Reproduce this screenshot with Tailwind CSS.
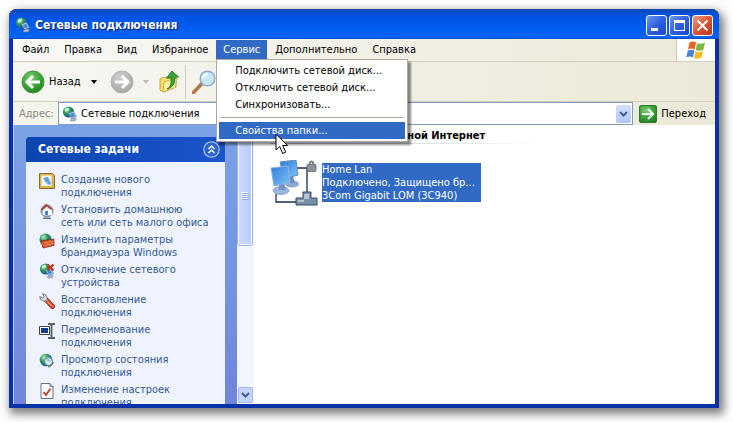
<!DOCTYPE html>
<html lang="ru">
<head>
<meta charset="utf-8">
<title>Сетевые подключения</title>
<script src="https://cdn.jsdelivr.net/npm/@tailwindcss/browser@4"></script>
</head>
<body class="flex h-screen flex-col overflow-hidden bg-[#fdfdfd] pt-[9px] pr-[14px] pb-[14px] pl-[9px] font-['DejaVu_Sans_Condensed','DejaVu_Sans',sans-serif] text-[11px] leading-[13px] text-black">
<svg class="absolute size-0" aria-hidden="true">
  <defs>
    <radialGradient id="globe" cx=".35" cy=".3" r=".8"><stop offset="0" stop-color="#b9f0c4"/><stop offset=".4" stop-color="#2f9a5c"/><stop offset="1" stop-color="#17458f"/></radialGradient>
    <linearGradient id="screen" x1="0" y1="0" x2="1" y2="1"><stop offset="0" stop-color="#2f7bd8"/><stop offset="1" stop-color="#7fc4fa"/></linearGradient>
    <radialGradient id="green" cx=".4" cy=".3" r=".8"><stop offset="0" stop-color="#7fcf6f"/><stop offset=".5" stop-color="#3fa63a"/><stop offset="1" stop-color="#1d7a1c"/></radialGradient>
    <radialGradient id="gray" cx=".4" cy=".3" r=".8"><stop offset="0" stop-color="#d0d0d0"/><stop offset="1" stop-color="#a0a0a0"/></radialGradient>
    <symbol id="net" viewBox="0 0 16 16">
      <circle cx="6.500" cy="6" r="5.600" fill="url(#globe)"/>
      <path d="M3 3.500q2-2 4-1.500l-1 2.500-3 1z" fill="#d9ffe0"/>
      <path d="M6.500 7l5-1.500 3 5-5 2z" fill="#d5e6f7" stroke="#4d719f" stroke-width=".7"/>
      <path d="M7.800 7.700l3.400-1 2 3.400-3.500 1.300z" fill="#3b8bd9"/>
      <path d="M8 14q3-3 6.500-1.500L13 15H9z" fill="#a9bccf" stroke="#6b7f96" stroke-width=".5"/>
    </symbol>
  </defs>
</svg>

<div class="flex min-h-0 flex-1 flex-col rounded-t-lg bg-[#0831a8] shadow-[3px_4px_9px_2px_rgba(0,0,0,0.5)]">
  <header class="flex h-[30px] shrink-0 items-center rounded-t-lg bg-linear-to-b from-[#0a48b8] via-[#0054e6] via-25% to-[#0464f8] pt-[2px] pr-[6px] pl-[6px] shadow-[inset_0_1px_0_#1a4a9e,inset_0_-1px_0_#0650cc]">
    <svg class="size-[16px]"><use href="#net"/></svg>
    <h1 class="ml-[4px] flex-1 text-[12px] font-bold text-white [text-shadow:1px_1px_1px_#0a1f66]">Сетевые подключения</h1>
    <div class="flex gap-[2px]">
      <button aria-label="Свернуть" class="size-[21px] rounded-[3px] border border-white bg-linear-to-br from-[#6f97f2] via-[#2f5ee0] to-[#1c47c4]"><svg viewBox="0 0 19 19" class="size-full"><path d="M4 12h7v3H4z" fill="#fff"/></svg></button>
      <button aria-label="Развернуть" class="size-[21px] rounded-[3px] border border-white bg-linear-to-br from-[#6f97f2] via-[#2f5ee0] to-[#1c47c4]"><svg viewBox="0 0 19 19" class="size-full"><path d="M4 4h11v11H4zM5 7v7h9V7z" fill="#fff" fill-rule="evenodd"/></svg></button>
      <button aria-label="Закрыть" class="size-[21px] rounded-[3px] border border-white bg-linear-to-br from-[#ee9a80] via-[#dc5334] to-[#b8361a]"><svg viewBox="0 0 19 19" class="size-full"><path d="M4.500 4.500l10 10M14.500 4.500l-10 10" stroke="#fff" stroke-width="2"/></svg></button>
    </div>
  </header>

  <div class="mx-[4px] mb-[4px] flex min-h-0 flex-1 flex-col bg-white">
    <div class="flex h-[23px] shrink-0 border-b border-[#d3cfbf] bg-linear-to-r from-[#f8f8f6] to-[#ece9d8] pl-[2px]">
      <nav class="relative z-10 flex h-[20px] flex-1 gap-px pt-[1px]">
        <button class="px-[7px]">Файл</button>
        <button class="px-[7px]">Правка</button>
        <button class="px-[7px]">Вид</button>
        <button class="px-[7px]">Избранное</button>
        <div class="relative">
          <button class="h-full bg-[#316ac5] px-[7px] text-white">Сервис</button>
          <div class="absolute top-full left-0 w-[192px] border border-[#aca899] bg-white p-[2px] shadow-[3px_3px_2px_rgba(0,0,0,0.45)]">
            <button class="block h-[17px] w-full pl-[16px] text-left">Подключить сетевой диск...</button>
            <button class="block h-[17px] w-full pl-[16px] text-left">Отключить сетевой диск...</button>
            <button class="block h-[17px] w-full pl-[16px] text-left">Синхронизовать...</button>
            <hr class="mx-[1px] my-[4px] border-[#aca899]">
            <button class="block h-[17px] w-full bg-[#316ac5] pl-[16px] text-left text-white">Свойства папки...</button>
            <svg class="absolute top-[73px] left-[58px] h-[22px] w-[14px]" viewBox="0 0 14 22"><path d="M1 1v16l3.700-3.500 3 7 3-1.300-3-6.700H12.500z" fill="#fff" stroke="#000"/></svg>
          </div>
        </div>
        <button class="px-[7px]">Дополнительно</button>
        <button class="px-[7px]">Справка</button>
      </nav>
      <div class="flex w-[39px] items-center justify-center border-l border-[#c9c5b4] bg-white">
        <svg class="h-[19px] w-[20px]" viewBox="0 0 20 19">
          <path d="M3.500 1.500Q7-.5 10 1.500L8.700 8.500Q5.500 6.700 2 8.300z" fill="#e8622c"/>
          <path d="M11 2.200q4 1.600 8-.7l-1.700 7.300q-3.700 1.800-7.500.2z" fill="#7cb940"/>
          <path d="M1.800 9.500q3.500-1.700 6.700 0L7 16.500Q4 14.800.3 16.300z" fill="#4a86d8"/>
          <path d="M9.600 10.200q3.700 1.500 7.500-.3l-1.600 6.900q-3.700 1.900-7.400.3z" fill="#f5bf2c"/>
        </svg>
      </div>
    </div>

    <div class="flex h-[40px] shrink-0 items-center border-b border-[#d3cfbf] bg-linear-to-r from-[#f7f6f2] to-[#ece9d8] pl-[8px]">
      <button class="flex items-center gap-[4px]">
        <svg class="size-[24px]" viewBox="0 0 24 24"><circle cx="12" cy="12" r="11" fill="url(#green)" stroke="#4d9a48"/><path d="M12 6l-6 6 6 6M6.500 12H19" fill="none" stroke="#fff" stroke-width="3"/></svg>
        Назад
      </button>
      <button aria-label="История" class="ml-[10px]"><svg class="h-[4px] w-[6px]" viewBox="0 0 6 4"><path d="M0 0h6L3 4z"/></svg></button>
      <button aria-label="Вперёд" class="ml-[13px]"><svg class="size-[24px]" viewBox="0 0 24 24"><circle cx="12" cy="12" r="11" fill="url(#gray)" stroke="#b5b5b5"/><path d="M12 6l6 6-6 6M17.500 12H5" fill="none" stroke="#fff" stroke-width="3"/></svg></button>
      <button aria-label="История вперёд" class="ml-[9px]"><svg class="h-[4px] w-[6px]" viewBox="0 0 6 4"><path d="M0 0h6L3 4z" fill="#bbb"/></svg></button>
      <button aria-label="Вверх" class="ml-[9px]">
        <svg class="size-[23px]" viewBox="0 0 23 23"><path d="M2 9l5-2 2 1.500L18 6v11L6 22 2 20z" fill="#f7df6a" stroke="#b8962c" stroke-width=".8"/><path d="M6 12l13-4-2 9.500L5 22z" fill="#fdf0a0" stroke="#c5a43a" stroke-width=".8"/><path d="M9 19q5-2 4-11H8.500L14 1l6.500 6H17q.5 10-8 12z" fill="#35a535" stroke="#1b6e1f" stroke-width=".8"/></svg>
      </button>
      <span class="mr-[6px] ml-[4px] h-[34px] w-px bg-[#cfccbd]"></span>
      <button aria-label="Поиск"><svg class="size-[24px]" viewBox="0 0 24 24"><path d="M1.500 22.500l8.500-9" stroke="#b5764c" stroke-width="3.500" stroke-linecap="round"/><circle cx="15.500" cy="8.500" r="7.300" fill="#c9e8fa" stroke="#8cacc6" stroke-width="1.500"/><path d="M11 8q1-4 5-4" stroke="#fff" stroke-width="2" fill="none"/></svg></button>
    </div>

    <div class="flex h-[23px] shrink-0 items-center bg-linear-to-r from-[#f5f4ee] to-[#ece9d8] pr-[9px] pl-[6px]">
      <label for="address" class="w-[39px] text-[#8b8a80]">Адрес:</label>
      <div class="flex h-full min-w-0 flex-1 items-center border border-[#7f9db9] bg-white pr-px pl-[3px]">
        <svg class="size-[16px] shrink-0"><use href="#net"/></svg>
        <input id="address" value="Сетевые подключения" class="ml-[3px] min-w-0 flex-1 outline-none">
        <button aria-label="Список адресов" class="flex h-[18px] w-[15px] items-center justify-center rounded-[2px] bg-linear-to-b from-[#d3e0fd] to-[#b0c6f6]"><svg class="h-[6px] w-[9px]" viewBox="0 0 9 6"><path d="M1 1l3.500 3.500L8 1" fill="none" stroke="#45608f" stroke-width="2"/></svg></button>
      </div>
      <button class="ml-[6px] flex items-center gap-[4px]">
        <svg class="size-[18px]" viewBox="0 0 18 18"><rect x=".5" y=".5" width="17" height="17" rx="1.500" fill="url(#green)" stroke="#2e7d2e"/><path d="M9 4l5 5-5 5M13.500 9H3" fill="none" stroke="#fff" stroke-width="2"/></svg>
        Переход
      </button>
    </div>

    <div class="flex min-h-0 flex-1">
      <aside class="w-[224px] shrink-0 overflow-hidden border-l border-[#c5d5f7] bg-linear-to-b from-[#7ba2e7] to-[#6f86db] pt-[12px] pr-[12px] pl-[12px]">
        <h2 class="flex h-[25px] items-center justify-between rounded-t-[4px] bg-linear-to-r from-[#0d45b0] to-[#1b55cc] pr-[5px] pl-[12px] text-[12px] font-bold text-white">Сетевые задачи
          <button aria-label="Свернуть раздел"><svg class="size-[17px]" viewBox="0 0 17 17"><circle cx="8.500" cy="8.500" r="7.700" fill="#2f62cf" stroke="#9db9f2" stroke-width="1.300"/><path d="M5.500 8l3-3 3 3M5.500 12l3-3 3 3" fill="none" stroke="#fff" stroke-width="1.500"/></svg></button>
        </h2>
        <ul class="flex h-[260px] flex-col gap-[4px] bg-[#eff3ff] pt-[11px] pl-[13px]">
          <li><a href="#" class="flex gap-[6px] text-[#33598f]"><svg class="size-[16px]" viewBox="0 0 16 16"><path d="M.5.5h13l2 2v13H.5z" fill="#d9b34e" stroke="#8c6b1f"/><path d="M2.500 2.500h10v10.500h-10z" fill="#f3f7fc"/><path d="M4 5l5-1 2 4-4 2zM9 8l3 1-1 3-3-1z" fill="#5da0d8"/></svg><span>Создание нового<br>подключения</span></a></li>
          <li><a href="#" class="flex gap-[6px] text-[#33598f]"><svg class="size-[16px]" viewBox="0 0 16 16"><circle cx="8" cy="8" r="6" fill="#a9bdd6" stroke="#6b819f"/><path d="M4 6.500L8.500 3 13 6.500V12H4z" fill="#fff"/><path d="M2 6.500L7 .8 13.500 6 12 7 7.700 3.500 3.500 7.500z" fill="#b8402e"/><path d="M6 8h3v4H6z" fill="#527fc0"/><path d="M4 15.300h8" stroke="#53657b" stroke-width="1.300"/></svg><span>Установить домашнюю<br>сеть или сеть малого офиса</span></a></li>
          <li><a href="#" class="flex gap-[6px] text-[#33598f]"><svg class="size-[16px]" viewBox="0 0 16 16"><circle cx="6.500" cy="6.500" r="6" fill="url(#globe)"/><path d="M2 8l13-2v6.500L4 15z" fill="#d24a20" stroke="#7d240e" stroke-width=".7"/><path d="M3 10.300l12-2M4 12.600l11-2.200M7 7.500v2.200M11 7v2M9 9.500V12M13 8.700v2M7 12v2M11 11.300v2" stroke="#f3b18e" stroke-width=".6"/></svg><span>Изменить параметры<br>брандмауэра Windows</span></a></li>
          <li><a href="#" class="flex gap-[6px] text-[#33598f]"><svg class="size-[16px]" viewBox="0 0 16 16"><use href="#net" width="16" height="16"/><path d="M8.500 1.500l6 6M14.500 1.500l-6 6" stroke="#c9301c" stroke-width="2.200"/></svg><span>Отключение сетевого<br>устройства</span></a></li>
          <li><a href="#" class="flex gap-[6px] text-[#33598f]"><svg class="size-[16px]" viewBox="0 0 16 16"><path d="M7 6.500l6.500 7" stroke="#912c1b" stroke-width="4.800" stroke-linecap="round"/><path d="M7 6.500l6.500 7" stroke="#e5583c" stroke-width="3" stroke-linecap="round"/><path d="M7.500 7.500l5 5.500" stroke="#f7b09c" stroke-linecap="round"/><path d="M3.500.8L5 3.500 3.500 5 .8 3.500Q.5 7 3.500 7.500L6 8.500l2.500-2.500-.8-2.300Q7 .5 3.500.8z" fill="#d6d9de" stroke="#5b6068" stroke-width=".8"/></svg><span>Восстановление<br>подключения</span></a></li>
          <li><a href="#" class="flex gap-[6px] text-[#33598f]"><svg class="size-[16px]" viewBox="0 0 16 16"><path d="M.5 3.500h10v8H.5z" fill="#fff" stroke="#39414f"/><path d="M2 5h7v5H2z" fill="#123a8e"/><path d="M9 1h2.500l1 1 1-1H16M9 15h2.500l1-1 1 1H16M12.500 2v12" fill="none" stroke="#555d6b" stroke-width="1.800"/></svg><span>Переименование<br>подключения</span></a></li>
          <li><a href="#" class="flex gap-[6px] text-[#33598f]"><svg class="size-[16px]" viewBox="0 0 16 16"><circle cx="7" cy="7" r="6.300" fill="url(#globe)"/><circle cx="9.500" cy="8.500" r="4" fill="#dcebf6" stroke="#557f9e"/><path d="M7 7q2.500-2 5 .5L10 9z" fill="#8fc2e4"/><path d="M9 14q4-1 5.500-5" fill="none" stroke="#6b8a6b" stroke-width="1.500"/></svg><span>Просмотр состояния<br>подключения</span></a></li>
          <li><a href="#" class="flex gap-[6px] text-[#33598f]"><svg class="size-[16px]" viewBox="0 0 16 16"><path d="M2 .5h9l3 3v12H2z" fill="#fbfbfd" stroke="#6a7382"/><path d="M11 .5v3h3" fill="#c9d2de" stroke="#6a7382"/><path d="M4.500 9l2.500 3 4.500-6.500" fill="none" stroke="#b8442f" stroke-width="1.900"/></svg><span>Изменение настроек<br>подключения</span></a></li>
        </ul>
      </aside>
      <div class="flex w-[17px] shrink-0 flex-col justify-between bg-[#f3f5fd] pr-px">
        <div class="flex h-[121px] items-center justify-center rounded-[3px] border border-[#98b0e8] bg-linear-to-r from-[#cbdafc] to-[#b9ccf8] pt-[20px] shadow-[inset_0_0_0_1px_#fff]"><svg class="size-[8px]" viewBox="0 0 8 8"><path d="M0 .5h7M0 2.500h7M0 4.500h7M0 6.500h7" stroke="#f4f8ff"/><path d="M1 1.500h7M1 3.500h7M1 5.500h7M1 7.500h7" stroke="#8fabe8"/></svg></div>
        <button aria-label="Прокрутить вниз" class="mx-auto mb-px flex h-[16px] w-[15px] items-center justify-center rounded-[2px] border border-[#a8bcea] bg-[#c4d5fb]"><svg class="h-[6px] w-[9px]" viewBox="0 0 9 6"><path d="M1 1l3.500 3.500L8 1" fill="none" stroke="#3f5a92" stroke-width="2"/></svg></button>
      </div>
      <main class="min-w-0 flex-1 pt-[4px] pl-[16px]">
        <h2 class="font-bold">ЛВС или высокоскоростной Интернет</h2>
        <div class="mt-px h-px w-[276px] bg-linear-to-r from-[#b9bcc4] to-white"></div>
        <div class="mt-[16px] flex items-start">
          <svg class="size-[48px]" viewBox="0 0 48 48">
            <path d="M27 8h10v24M6 34v8h20" fill="none" stroke="#1c2a5c" stroke-width="1.300"/>
            <ellipse cx="22" cy="24" rx="7" ry="3.500" fill="#8fa9d3"/>
            <path d="M19 17l4-1 2 7h-5z" fill="#6b8bc4"/>
            <path d="M10 2l16-2 2 15-14 4z" fill="url(#screen)" stroke="#6d8dbb"/>
            <ellipse cx="11" cy="30.500" rx="8" ry="4" fill="#a0b5da" stroke="#6f8abb" stroke-width=".6"/>
            <path d="M9 23l5-1 2 8H9z" fill="#7593cb"/>
            <path d="M1 8l17-2 2 16-16 4z" fill="url(#screen)" stroke="#8fb2e2"/>
            <path d="M39.500 5V3.500q2-4 4 0V5" fill="none" stroke="#777d85" stroke-width="1.800"/>
            <rect x="37" y="4.500" width="9" height="7" rx="1" fill="#8c9299" stroke="#5f656d" stroke-width=".8"/>
            <path d="M33 32h8v6h6v7H26v-7h7z" fill="#7890a8" stroke="#364a63"/><path d="M34 34h5v5h-5zM28 40h6v2h-6z" fill="#b5c6d6"/>
          </svg>
          <div class="mt-[3px] ml-[4px] w-[159px] overflow-hidden bg-[#316ac5] whitespace-nowrap text-white">
            <p>Home Lan</p>
            <p>Подключено, Защищено бр...</p>
            <p>3Com Gigabit LOM (3C940)</p>
          </div>
        </div>
      </main>
    </div>
  </div>
</div>
</body>
</html>
